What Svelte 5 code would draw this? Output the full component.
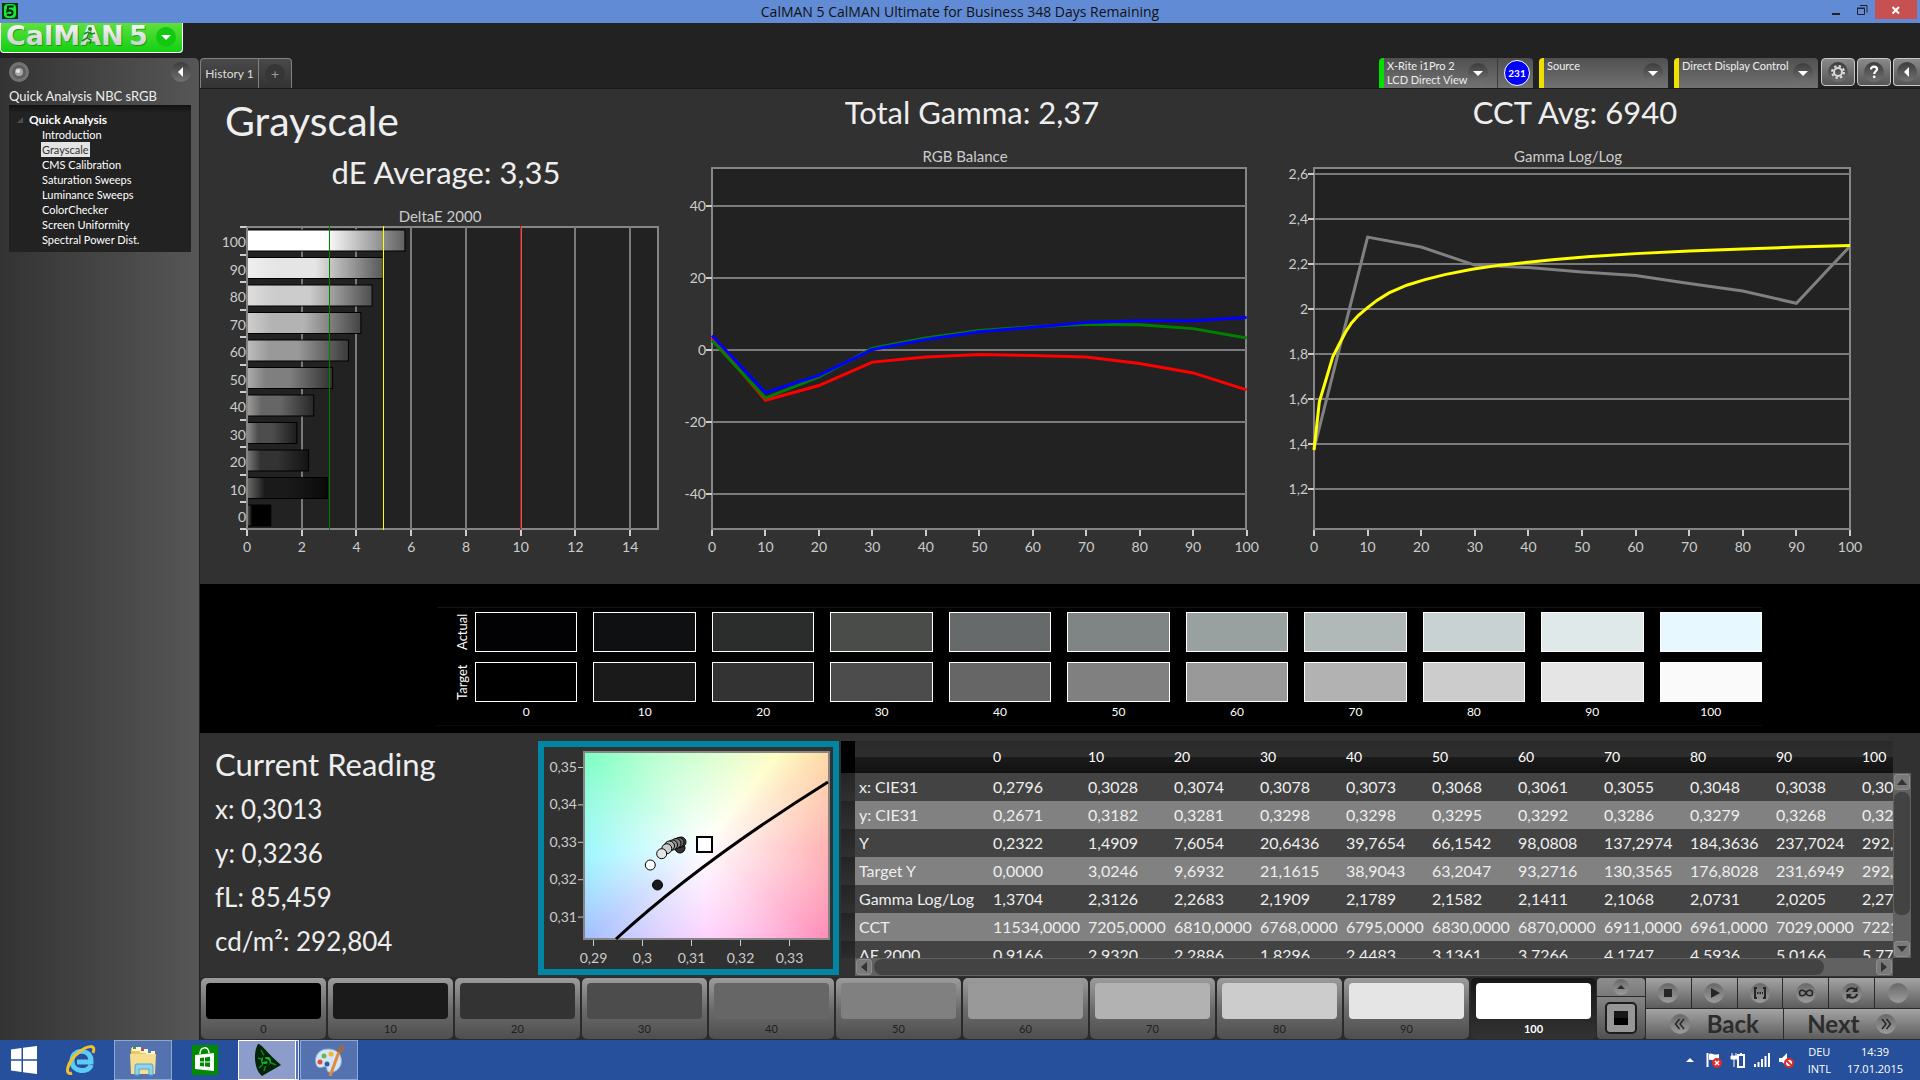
<script>
  // --- DATA ---

  const levels = [0, 10, 20, 30, 40, 50, 60, 70, 80, 90, 100];

  const pages = [
    "Introduction",
    "Grayscale",
    "CMS Calibration",
    "Saturation Sweeps",
    "Luminance Sweeps",
    "ColorChecker",
    "Screen Uniformity",
    "Spectral Power Dist.",
  ];
  let currentPage = $state("Grayscale");
  let selectedLevel = $state(100);

  const deltaE = [0.87, 2.932, 2.25, 1.82, 2.44, 3.13, 3.71, 4.16, 4.57, 4.98, 5.77];

  const rgb = [
    { color: "#ff0000", values: [3.2, -14.1, -10, -3.5, -2.1, -1.4, -1.7, -2.1, -3.9, -6.5, -11.2] },
    { color: "#008000", values: [2.5, -13.5, -7.6, 0.4, 3.2, 5.3, 6.3, 7, 6.9, 5.8, 3.2] },
    { color: "#0000ff", values: [3.9, -12, -7.2, 0, 2.8, 4.9, 6.2, 7.5, 8, 8, 8.9] },
  ];

  const gammaMeasured = [1.38, 2.318, 2.274, 2.194, 2.183, 2.164, 2.148, 2.113, 2.079, 2.025, 2.278];
  const gammaTarget = [
    [0, 1.374], [1, 1.588], [2.2, 1.684], [3.5, 1.788], [4.6, 1.839], [5.9, 1.898],
    [7, 1.938], [8.3, 1.972], [10, 2.006], [11.8, 2.039], [14, 2.071], [17.3, 2.105],
    [20.7, 2.13], [24.4, 2.152], [29.5, 2.176], [34.7, 2.194], [39.9, 2.207], [45, 2.219],
    [51, 2.231], [60, 2.245], [70, 2.257], [80, 2.266], [90, 2.274], [100, 2.281],
  ];

  const actual = [
    "#020204", "#0e1012", "#2b2d2c", "#4a4c4a", "#666a6a", "#7f8584",
    "#98a19f", "#b0b9b8", "#c8d2d2", "#dfe9ea", "#e8f8ff",
  ];
  const target = [
    "#000000", "#1a1a1a", "#333333", "#4c4c4c", "#666666", "#808080",
    "#999999", "#b2b2b2", "#cccccc", "#e5e5e5", "#fafafa",
  ];

  const readings = ["x: 0,3013", "y: 0,3236", "fL: 85,459", "cd/m²: 292,804"];

  const ciePoints = [
    { x: 657.5, y: 885, color: "#1a1a1a" },
    { x: 680, y: 848, color: "#333333" },
    { x: 681, y: 842, color: "#4c4c4c" },
    { x: 679, y: 842.5, color: "#666666" },
    { x: 676, y: 843.5, color: "#808080" },
    { x: 672.5, y: 845, color: "#999999" },
    { x: 669.5, y: 846, color: "#b2b2b2" },
    { x: 666.8, y: 848.7, color: "#cccccc" },
    { x: 661.7, y: 853.7, color: "#e5e5e5" },
    { x: 650.3, y: 865, color: "#ffffff" },
  ];

  const rows = [
    ["x: CIE31", "0,2796", "0,3028", "0,3074", "0,3078", "0,3073", "0,3068", "0,3061", "0,3055", "0,3048", "0,3038", "0,3013"],
    ["y: CIE31", "0,2671", "0,3182", "0,3281", "0,3298", "0,3298", "0,3295", "0,3292", "0,3286", "0,3279", "0,3268", "0,3236"],
    ["Y", "0,2322", "1,4909", "7,6054", "20,6436", "39,7654", "66,1542", "98,0808", "137,2974", "184,3636", "237,7024", "292,8040"],
    ["Target Y", "0,0000", "3,0246", "9,6932", "21,1615", "38,9043", "63,2047", "93,2716", "130,3565", "176,8028", "231,6949", "292,8040"],
    ["Gamma Log/Log", "1,3704", "2,3126", "2,2683", "2,1909", "2,1789", "2,1582", "2,1411", "2,1068", "2,0731", "2,0205", "2,2742"],
    ["CCT", "11534,0000", "7205,0000", "6810,0000", "6768,0000", "6795,0000", "6830,0000", "6870,0000", "6911,0000", "6961,0000", "7029,0000", "7221,0000"],
    ["ΔE 2000", "0,9166", "2,9320", "2,2886", "1,8296", "2,4483", "3,1361", "3,7266", "4,1747", "4,5936", "5,0166", "5,7712"],
  ];

  // --- SCALES ---

  const deX = (v) => 247 + v * 27.37;
  const deY = (i) => 227 + (10 - i) * 27.5;
  const rgbX = (v) => 712 + v * 5.346;
  const rgbY = (v) => 349.5 - v * 3.6;
  const gamX = (v) => 1314 + v * 5.36;
  const gamY = (v) => 173.5 + (2.6 - v) * 225.7;
  const comma = (v) => String(v).replace(".", ",");

  const line = (points, fx, fy) => points.map(([x, y]) => `${fx(x)},${fy(y)}`).join(" ");
  const byLevel = (values) => values.map((v, i) => [levels[i], v]);

  function gray(v) {
    const n = Math.round(v);
    return `rgb(${n},${n},${n})`;
  }
</script>

{#snippet drop()}
  <svg class="drop" viewBox="0 0 20 20" aria-hidden="true">
    <circle cx="10" cy="10" r="10" fill="url(#knob)" />
    <path d="M5 8h10l-5 5z" fill="#fff" />
  </svg>
{/snippet}

<svg class="defs" width="0" height="0" aria-hidden="true">
  <defs>
    <linearGradient id="knob" x1="0" y1="0" x2="0" y2="1">
      <stop offset="0" stop-color="#3c3c3c" />
      <stop offset="1" stop-color="#727272" />
    </linearGradient>
    <linearGradient id="disc" x1="0" y1="0" x2="0" y2="1">
      <stop offset="0" stop-color="#686868" />
      <stop offset="1" stop-color="#9c9c9c" />
    </linearGradient>
    <linearGradient id="silver" x1="0" y1="0" x2="0" y2="1">
      <stop offset="0" stop-color="#fff" />
      <stop offset="1" stop-color="#c4c4c4" />
    </linearGradient>
  </defs>
</svg>

<div class="window">
  <header class="titlebar">
    <svg class="app-icon" viewBox="0 0 16 16" aria-hidden="true">
      <rect width="16" height="16" fill="#043c04" />
      <rect x="2" y="1" width="12" height="14" rx="4" fill="#19e53a" />
      <path d="M11.500 3.500H6.200L5.500 8c2-1 5-.8 5 1.700 0 2.600-3 2.800-5.500 1.800" fill="none" stroke="#021" stroke-width="2.200" />
    </svg>
    <span class="title">CalMAN 5 CalMAN Ultimate for Business 348 Days Remaining</span>
    <div class="window-buttons">
      <button aria-label="Minimize"><svg viewBox="0 0 12 12"><path d="M2 9h8v2H2z" fill="#222" /></svg></button>
      <button aria-label="Restore"><svg viewBox="0 0 12 12"><path d="M1.500 4.500h7v6h-7zM1 4h8M4 1.500h7v7" fill="none" stroke="#222" /></svg></button>
      <button class="close" aria-label="Close"><svg viewBox="0 0 12 12"><path d="M2.500 3l6.500 6.500M9 3L2.500 9.500" stroke="#fff" stroke-width="2" /></svg></button>
    </div>
  </header>

  <div class="brand">
    <button class="logo" aria-label="CalMAN 5 menu">
      <svg viewBox="0 0 181 29">
        <g fill="#0a7a0a" opacity="0.6">
          <text x="6" y="23">CalMAN</text>
          <text x="129" y="23">5</text>
        </g>
        <g fill="url(#silver)">
          <text x="5" y="22">CalMAN</text>
          <text x="128" y="22">5</text>
        </g>
        <circle cx="89" cy="6" r="2" fill="#1c8a1c" />
        <path d="M83 11l4-2 4 2 3-1M88 10l-2 5 4 2-1 4M86 15l-5 3" fill="none" stroke="#1c8a1c" stroke-width="1.500" />
        <circle cx="165" cy="14" r="10" fill="#12c812" />
        <path d="M160 12h10l-5 5z" fill="#fff" />
      </svg>
    </button>
  </div>

  <div class="body">
    <aside class="sidebar">
      <div class="sidebar-tools">
        <button aria-label="Record">
          <svg viewBox="0 0 20 20"><circle cx="10" cy="10" r="10" fill="#747474" /><circle cx="10" cy="10" r="7" fill="#5e5e5e" /><circle cx="10" cy="10" r="4" fill="#a8a8a8" /><circle cx="9" cy="9" r="2" fill="#e4e4e4" /></svg>
        </button>
        <button aria-label="Collapse panel">
          <svg viewBox="0 0 20 20"><circle cx="10" cy="10" r="10" fill="url(#knob)" /><path d="M12 5v10l-5-5z" fill="#fff" /></svg>
        </button>
      </div>
      <p class="workflow">Quick Analysis NBC sRGB</p>
      <nav class="tree">
        <p class="tree-root">
          <svg viewBox="0 0 6 6" aria-hidden="true"><path d="M6 0v6H0z" fill="#4c4c4c" /></svg>
          Quick Analysis
        </p>
        <ul>
          {#each pages as page}
            <li>
              <button class:active={page === currentPage} onclick={() => (currentPage = page)}>{page}</button>
            </li>
          {/each}
        </ul>
      </nav>
    </aside>

    <main>
      <div class="tabbar">
        <div class="tabs">
          <button class="tab">History 1</button>
          <button class="tab add" aria-label="Add history"><span>+</span></button>
        </div>
        <div class="devices">
          <div class="device meter">
            <button class="device-menu">
              <span>X-Rite i1Pro 2<br />LCD Direct View</span>
              {@render drop()}
            </button>
            <span class="badge">231</span>
          </div>
          <button class="device source">
            <span>Source</span>
            {@render drop()}
          </button>
          <button class="device display">
            <span>Direct Display Control</span>
            {@render drop()}
          </button>
          <button class="tool" aria-label="Settings">
            <svg viewBox="0 0 20 20">
              <circle cx="10" cy="10" r="10" fill="url(#knob)" />
              <circle cx="10" cy="10" r="4" fill="none" stroke="#ddd" stroke-width="2" />
              <circle cx="10" cy="10" r="6" fill="none" stroke="#ddd" stroke-width="2" stroke-dasharray="2.400 2.310" />
            </svg>
          </button>
          <button class="tool" aria-label="Help">
            <svg viewBox="0 0 20 20">
              <circle cx="10" cy="10" r="10" fill="url(#knob)" />
              <path d="M7 7.500c0-4 6-3.500 6-.3 0 2-2.800 2.200-2.800 4.800" fill="none" stroke="#fff" stroke-width="2.200" />
              <circle cx="10.200" cy="14.800" r="1.400" fill="#fff" />
            </svg>
          </button>
          <button class="tool last" aria-label="Collapse toolbar">
            <svg viewBox="0 0 20 20"><circle cx="10" cy="10" r="10" fill="url(#knob)" /><path d="M12 5v10l-5-5z" fill="#fff" /></svg>
          </button>
        </div>
      </div>

      <section class="charts">
        <div class="chart first">
          <h1>Grayscale</h1>
          <h2>dE Average: 3,35</h2>
          <svg viewBox="200 195 480 389">
            <defs>
              {#each levels as level, i}
                <linearGradient id="bar{i}">
                  <stop offset="0" stop-color={gray(level * 2.55 + (255 - level * 2.55) * 0.36)} />
                  <stop offset="0.22" stop-color={gray(level * 2.55)} />
                  <stop offset="0.5" stop-color={gray(level * 2.55)} />
                  <stop offset="1" stop-color={gray(level * 2.55 * 0.38)} />
                </linearGradient>
              {/each}
            </defs>
            <text class="caption" x="440" y="222" text-anchor="middle">DeltaE 2000</text>
            <rect class="plot" x="247" y="227" width="411" height="302" />
            {#each [0, 2, 4, 6, 8, 10, 12, 14] as v}
              <path class="grid" d="M{deX(v)} 227V529" />
              <path class="tick" d="M{deX(v)} 530v6" />
              <text x={deX(v)} y="552" text-anchor="middle">{v}</text>
            {/each}
            {#each levels as level, i}
              <path class="tick" d="M240 {deY(i)}h7" />
              <rect x="247" y={deY(i) + 3} width={deX(deltaE[i]) - 247} height="21" fill="url(#bar{i})" stroke="#000" />
              <text x="246" y={deY(i) + 20} text-anchor="end">{level}</text>
            {/each}
            <path class="tick" d="M240 529h7" />
            <path class="frame" d="M247 227V529" />
            <path d="M{deX(3)} 226V530" stroke="#008000" />
            <path d="M{deX(5)} 226V530" stroke="#ffff00" />
            <path d="M{deX(10)} 226V530" stroke="#ff0000" />
          </svg>
        </div>

        <div class="chart">
          <h2>Total Gamma: 2,37</h2>
          <svg viewBox="680 135 590 449">
            <text class="caption" x="965" y="162" text-anchor="middle">RGB Balance</text>
            <rect class="plot" x="712" y="168" width="534" height="361" />
            {#each [40, 20, 0, -20, -40] as v}
              <path class="grid" d="M712 {rgbY(v)}H1246" />
              <path class="tick" d="M706 {rgbY(v)}h6" />
              <text x="706" y={rgbY(v) + 5} text-anchor="end">{v}</text>
            {/each}
            {#each levels as level}
              <path class="tick" d="M{rgbX(level)} 530v6" />
              <text x={rgbX(level)} y="552" text-anchor="middle">{level}</text>
            {/each}
            {#each rgb as series}
              <polyline points={line(byLevel(series.values), rgbX, rgbY)} stroke={series.color} />
            {/each}
          </svg>
        </div>

        <div class="chart last">
          <h2>CCT Avg: 6940</h2>
          <svg viewBox="1270 135 650 449">
            <text class="caption" x="1568" y="162" text-anchor="middle">Gamma Log/Log</text>
            <rect class="plot" x="1314" y="168" width="536" height="361" />
            {#each [2.6, 2.4, 2.2, 2, 1.8, 1.6, 1.4, 1.2] as v}
              <path class="grid" d="M1314 {gamY(v)}H1850" />
              <path class="tick" d="M1308 {gamY(v)}h6" />
              <text x="1308" y={gamY(v) + 5} text-anchor="end">{comma(v)}</text>
            {/each}
            {#each levels as level}
              <path class="tick" d="M{gamX(level)} 530v6" />
              <text x={gamX(level)} y="552" text-anchor="middle">{level}</text>
            {/each}
            <polyline points={line(byLevel(gammaMeasured), gamX, gamY)} stroke="#808080" />
            <polyline points={line(gammaTarget, gamX, gamY)} stroke="#ffff00" />
          </svg>
        </div>
      </section>

      <section class="swatches">
        <div class="swatch-grid">
          <span class="side-label">Actual</span>
          {#each actual as color}
            <div class="swatch" style="background: {color}"></div>
          {/each}
          <span class="side-label">Target</span>
          {#each target as color}
            <div class="swatch" style="background: {color}"></div>
          {/each}
          <span></span>
          {#each levels as level}
            <span class="level">{level}</span>
          {/each}
        </div>
      </section>

      <section class="lower">
        <div class="reading">
          <h2>Current Reading</h2>
          {#each readings as reading}
            <p>{reading}</p>
          {/each}
        </div>

        <div class="cie">
          <svg viewBox="544 747 289 222">
            <foreignObject x="584" y="752" width="245" height="187">
              <div class="gamut"></div>
            </foreignObject>
            <rect class="frame" x="584" y="752" width="245" height="187" fill="none" />
            {#each [0.29, 0.3, 0.31, 0.32, 0.33] as v, i}
              <path class="tick thin" d="M{593.5 + i * 49} 940v6" />
              <text x={593.5 + i * 49} y="963" text-anchor="middle">{comma(v)}</text>
            {/each}
            {#each [0.35, 0.34, 0.33, 0.32, 0.31] as v, i}
              <path class="tick thin" d="M578 {767.5 + i * 37.4}h5" />
              <text x="577" y={772 + i * 37.4} text-anchor="end">{comma(v)}</text>
            {/each}
            <path d="M616 939Q700 862 828 782" fill="none" stroke="#000" stroke-width="3" />
            {#each ciePoints as p}
              <circle cx={p.x} cy={p.y} r="5" fill={p.color} stroke="#000" />
            {/each}
            <rect x="697" y="837" width="15" height="15" fill="#fff" stroke="#000" stroke-width="2" />
          </svg>
        </div>

        <div class="data">
          <div class="table-clip">
            <table>
              <colgroup>
                <col class="c-handle" />
                <col class="c-name" />
                <col class="c-first" />
                {#each levels.slice(1) as level}
                  <col class="c-value" />
                {/each}
              </colgroup>
              <thead>
                <tr>
                  <th class="handle"></th>
                  <th></th>
                  {#each levels as level}
                    <th>{level}</th>
                  {/each}
                </tr>
              </thead>
              <tbody>
                {#each rows as row}
                  <tr>
                    <td class="handle"></td>
                    {#each row as cell}
                      <td>{cell}</td>
                    {/each}
                  </tr>
                {/each}
              </tbody>
            </table>
          </div>
          <div class="vscroll">
            <button aria-label="Scroll up"><svg viewBox="0 0 10 10"><path d="M0 8h10L5 2z" /></svg></button>
            <div class="vtrack"><div class="vthumb"></div></div>
            <button aria-label="Scroll down"><svg viewBox="0 0 10 10"><path d="M0 2h10L5 8z" /></svg></button>
          </div>
          <div class="hscroll">
            <button aria-label="Scroll left"><svg viewBox="0 0 10 10"><path d="M8 0v10L2 5z" /></svg></button>
            <div class="htrack"><div class="hthumb"></div></div>
            <button aria-label="Scroll right"><svg viewBox="0 0 10 10"><path d="M2 0v10l6-5z" /></svg></button>
          </div>
        </div>
      </section>

      <section class="controls">
        <div class="patches">
          {#each levels as level, i}
            <button class="patch" class:selected={level === selectedLevel} onclick={() => (selectedLevel = level)}>
              <span class="patch-color" style="background: {i === 10 ? '#fff' : target[i]}"></span>
              {level}
            </button>
          {/each}
        </div>
        <div class="pattern">
          <button class="expand" aria-label="Expand patterns">
            <svg viewBox="0 0 16 16"><circle cx="8" cy="8" r="8" fill="url(#disc)" /><path d="M4 10h8L8 6z" fill="#2a2a2a" /></svg>
          </button>
          <button class="window-pattern" aria-label="Window pattern">
            <svg viewBox="0 0 32 32"><rect x="1" y="1" width="30" height="30" rx="4" fill="#969696" stroke="#1c1c1c" stroke-width="2" /><rect x="9" y="9" width="14" height="14" fill="#000" /><rect x="9" y="9" width="14" height="7" fill="#181818" /></svg>
          </button>
        </div>
        <div class="transport">
          <div class="transport-row">
            <button aria-label="Stop"><svg viewBox="0 0 20 20"><circle cx="10" cy="10" r="10" fill="url(#disc)" /><rect x="6" y="6" width="8" height="8" fill="#262626" /></svg></button>
            <button aria-label="Play"><svg viewBox="0 0 20 20"><circle cx="10" cy="10" r="10" fill="url(#disc)" /><path d="M7 5v10l9-5z" fill="#262626" /></svg></button>
            <button aria-label="Read series"><svg viewBox="0 0 20 20"><circle cx="10" cy="10" r="10" fill="url(#disc)" /><path d="M7 5H5v10h2M13 5h2v10h-2" fill="none" stroke="#262626" stroke-width="2" /><path d="M7 10h6" stroke="#262626" stroke-width="2" stroke-dasharray="1.500 1" /></svg></button>
            <button aria-label="Read continuously"><svg viewBox="0 0 20 20"><circle cx="10" cy="10" r="10" fill="url(#disc)" /><path d="M10 10c-2-4-6.500-3.500-6.500 0s4.500 4 6.500 0 6.500-3.500 6.500 0-4.500 4-6.500 0z" fill="none" stroke="#262626" stroke-width="1.600" /></svg></button>
            <button aria-label="Repeat"><svg viewBox="0 0 20 20"><circle cx="10" cy="10" r="10" fill="url(#disc)" /><path d="M5 9c.5-4 6-5 9-2M15 11c-.5 4-6 5-9 2" fill="none" stroke="#262626" stroke-width="2" /><path d="M15.500 3.500V9H10zM4.500 16.500V11H10z" fill="#262626" /></svg></button>
            <button aria-label="Options"><svg viewBox="0 0 20 20"><circle cx="10" cy="10" r="10" fill="url(#disc)" /></svg></button>
          </div>
          <div class="transport-row step">
            <button>
              <svg viewBox="0 0 20 20" aria-hidden="true"><circle cx="10" cy="10" r="10" fill="url(#disc)" /><path d="M9.500 5L5.500 10l4 5M14 5l-4 5 4 5" fill="none" stroke="#262626" stroke-width="1.500" /></svg>
              Back
            </button>
            <button>
              Next
              <svg viewBox="0 0 20 20" aria-hidden="true"><circle cx="10" cy="10" r="10" fill="url(#disc)" /><path d="M6 5l4 5-4 5M10.500 5l4 5-4 5" fill="none" stroke="#262626" stroke-width="1.500" /></svg>
            </button>
          </div>
        </div>
      </section>
    </main>
  </div>

  <footer class="taskbar">
    <div class="apps">
      <button class="app start" aria-label="Start">
        <svg viewBox="0 0 26 30"><path d="M0 4.500L10.500 3v11.300H0zM12 2.800L26 1v13.300H12zM0 15.700h10.500V27L0 25.500zM12 15.700h14V29l-14-1.800z" fill="#fff" /></svg>
      </button>
      <button class="app" aria-label="Internet Explorer">
        <svg viewBox="0 0 32 32">
          <path d="M26 21c-2 8-19 8-19-4 0-13 20-13 19 1H12" fill="none" stroke="#5ccbf5" stroke-width="5" />
          <path d="M7 29C-1 32 2 18 13 9 22 1 32 0 28 9" fill="none" stroke="#f5bf2a" stroke-width="3" />
        </svg>
      </button>
      <button class="app running" aria-label="File Explorer">
        <svg viewBox="0 0 32 32">
          <path d="M4 4h8v3h7v2h9v19H4z" fill="#e8c860" />
          <path d="M5 3h9v4H5z" fill="#fff6d0" /><path d="M13 5h8v4h-8z" fill="#fff6d0" /><path d="M19 7h9v4h-9z" fill="#fff6d0" />
          <path d="M6 3h3v2H6z" fill="#1fae2c" /><path d="M14 5h3v2h-3z" fill="#d9412c" /><path d="M21 7h3v2h-3z" fill="#2f8fe0" />
          <path d="M3 10h26l-1 20H4z" fill="#f5df8e" />
          <path d="M8 31v-9q0-2 2-2h14q2 0 2 2v9h-4v-6H12v6z" fill="#8fd3ef" stroke="#4ca4d4" />
        </svg>
      </button>
      <button class="app" aria-label="Store">
        <svg viewBox="0 0 32 32">
          <rect x="3" y="1" width="26" height="30" fill="#008a00" />
          <path d="M6 11l19-2v18L6 25z" fill="#fff" />
          <path d="M11 10c0-8 9-8 9-1" fill="none" stroke="#fff" stroke-width="1.500" />
          <path d="M11 14l4-.5v4h-4zM16 13.400l5-.6v4.700h-5zM11 18.500h4v4l-4-.5zM16 18.500h5V23l-5-.5z" fill="#008a00" />
        </svg>
      </button>
      <button class="app running current" aria-label="CalMAN 5">
        <svg viewBox="0 0 32 32">
          <path d="M7 0c3-1 8 8 23 21L11 32C3 26 2 8 7 0z" fill="#04240a" />
          <path d="M16 17L10 6M16 17L7 14M16 17L8 24M16 17l-3 10M16 17l9 4" stroke="#1fc52c" stroke-width="1.500" opacity="0.600" />
          <circle cx="15" cy="17" r="5" fill="#17b02a" />
          <path d="M19 12h-5.500l-.8 4.500c2-.8 5-.5 5 2 0 2.800-3.200 3-5.700 1.900" fill="none" stroke="#020" stroke-width="2.200" />
        </svg>
      </button>
      <button class="app running" aria-label="Paint">
        <svg viewBox="0 0 32 32">
          <path d="M15 5C5 5 1 13 3 20c1 4 4 4 7 3s4 0 4 3c1 5 12 2 14-6 2-9-4-15-13-15z" fill="#d4e6f5" stroke="#8fb0cc" />
          <circle cx="7" cy="18" r="2.500" fill="#e04a3a" /><circle cx="11" cy="12" r="2.500" fill="#6bb84a" />
          <circle cx="18" cy="10" r="2.500" fill="#f5b52a" /><circle cx="14" cy="20" r="2.500" fill="#2c5ea8" />
          <path d="M27 5L17 32" stroke="#e08a3a" stroke-width="3" /><path d="M24 7c0-4 4-3 5-7 4 4 1 9-2 9z" fill="#9c6b42" />
        </svg>
      </button>
    </div>
    <div class="tray">
      <svg viewBox="0 0 16 16" aria-hidden="true"><path d="M4 10h8L8 6z" fill="#fff" /></svg>
      <svg viewBox="0 0 16 16" aria-hidden="true"><path d="M1.500 1v14" stroke="#fff" stroke-width="2" /><path d="M3 2c3-2 4 2 10 0v6c-5 2-7-1-10 0z" fill="#fff" /><circle cx="11" cy="11" r="5" fill="#e02c2c" /><path d="M9 9l4 4M13 9l-4 4" stroke="#fff" stroke-width="1.500" /></svg>
      <svg viewBox="0 0 16 16" aria-hidden="true"><path d="M8 3h6v12H8zM10 2h2" fill="none" stroke="#fff" stroke-width="2" /><path d="M1 4h6v3H1zM2 1v3M6 1v3M4 7v8" fill="#fff" stroke="#fff" /></svg>
      <svg viewBox="0 0 16 16" aria-hidden="true"><path d="M0 12h2v3H0zM3.500 10h2v5h-2zM7 7h2v8H7zM10.500 4h2v11h-2zM14 1h2v14h-2z" fill="#fff" /></svg>
      <svg viewBox="0 0 16 16" aria-hidden="true"><path d="M1 6h3l5-5v13l-5-4H1z" fill="#fff" /><circle cx="11" cy="11" r="4" fill="#fff" stroke="#e02c2c" stroke-width="2" /><path d="M8 8l6 6" stroke="#e02c2c" stroke-width="2" /></svg>
      <button class="lang">DEU<br />INTL</button>
      <button class="clock">14:39<br />17.01.2015</button>
    </div>
  </footer>
</div>

<style>
  :global(body) {
    margin: 0;
    background: #222;
  }

  .defs {
    position: absolute;
  }

  .window {
    display: flex;
    flex-direction: column;
    min-height: 100vh;
    background: #222;
    color: #eee;
    font-family: Lato, "Open Sans", sans-serif;
    font-size: 14px;
  }

  button {
    margin: 0;
    padding: 0;
    border: none;
    background: none;
    color: inherit;
    font: inherit;
    cursor: pointer;
  }

  svg {
    display: block;
  }

  h1,
  h2,
  p,
  ul {
    margin: 0;
    padding: 0;
    font-weight: 400;
  }

  /* --- Title bar --- */
  .titlebar {
    display: grid;
    grid-template-columns: 1fr auto 1fr;
    height: 23px;
    background: #628bd6;
    color: #111;
    font: 14px/23px "Open Sans", sans-serif;
  }

  .app-icon {
    width: 16px;
    height: 16px;
    margin: 3px 2px;
  }

  .window-buttons {
    display: flex;
    justify-content: flex-end;
    padding-right: 3px;
  }

  .window-buttons button {
    display: flex;
    align-items: center;
    justify-content: center;
    width: 26px;
    height: 19px;
  }

  .window-buttons .close {
    width: 42px;
    background: #c75050;
  }

  .window-buttons svg {
    width: 12px;
    height: 12px;
  }

  .brand {
    height: 35px;
  }

  .logo {
    display: block;
    width: 183px;
    height: 30px;
    border: 1px solid #fff;
    border-top: none;
    border-radius: 0 0 4px 4px;
    background: linear-gradient(#5fe03c, #12d012);
  }

  .logo svg {
    width: 100%;
    overflow: visible;
  }

  .logo text {
    font: bold 27px "DejaVu Sans", sans-serif;
  }

  .body {
    display: grid;
    grid-template-columns: 200px minmax(0, 1fr);
    flex: 1;
  }

  /* --- Sidebar --- */
  .sidebar {
    margin-right: 1px;
    padding: 4px 8px 0 9px;
    border-radius: 0 5px 0 0;
    background: linear-gradient(90deg, #333, #565656);
  }

  .sidebar-tools {
    display: flex;
    justify-content: space-between;
  }

  .sidebar-tools svg,
  .tool svg,
  .drop {
    width: 20px;
    height: 20px;
  }

  .workflow {
    margin-top: 5px;
    font-size: 13px;
    line-height: 18px;
  }

  .tree {
    padding: 7px 8px 5px;
    background: linear-gradient(#121212, #222 8px);
    color: #fff;
    font-size: 12px;
    line-height: 15px;
  }

  .tree-root {
    display: flex;
    align-items: center;
    gap: 6px;
    font-weight: 700;
  }

  .tree-root svg {
    width: 6px;
    height: 6px;
  }

  .tree ul {
    padding-left: 24px;
    list-style: none;
  }

  .tree li {
    display: flex;
  }

  .tree li button {
    padding: 0 1px;
    font-size: 11px;
  }

  .tree .active {
    background: #e4e4e4;
    color: #333;
  }

  /* --- Tab bar --- */
  main {
    display: flex;
    flex-direction: column;
    background: #313131;
  }

  .tabbar {
    display: flex;
    justify-content: space-between;
    height: 30px;
    border-bottom: 1px solid #1a1a1a;
    background: #222;
  }

  .tabs {
    display: flex;
  }

  .tab {
    width: 59px;
    border: 1px solid #808080;
    border-bottom: none;
    border-radius: 4px 0 0 0;
    background: linear-gradient(#4a4a4a, #333);
    color: #ddd;
    font-size: 12px;
  }

  .tab.add {
    width: 33px;
    border-left: none;
    border-radius: 0 4px 0 0;
    color: #999;
    font-size: 14px;
  }

  .tab.add span {
    display: block;
    width: 20px;
    margin: 0 auto;
    border-radius: 50%;
    background: #363636;
    line-height: 20px;
  }

  .devices {
    display: flex;
  }

  .device {
    display: flex;
    align-items: flex-start;
    justify-content: space-between;
    margin-right: 6px;
    border-left: 5px solid #f0e000;
    border-radius: 4px 4px 0 0;
    background: linear-gradient(#505050, #727272);
    font-size: 11px;
    line-height: 14px;
    text-align: left;
    white-space: nowrap;
  }

  .device .drop {
    margin: 5px 5px 0 0;
  }

  .device > span:first-child,
  .device-menu > span {
    padding: 1px 0 0 3px;
  }

  .meter {
    width: 149px;
    border-left-color: #00e000;
  }

  .device-menu {
    display: flex;
    flex: 1;
    justify-content: space-between;
    align-items: flex-start;
    height: 30px;
    border-right: 1px solid #3c3c3c;
    line-height: 14px;
    text-align: left;
  }

  .device-menu .drop {
    margin-right: 9px;
  }

  .badge {
    width: 24px;
    height: 24px;
    margin: 2px 3px 0 6px;
    border: 1px solid #fff;
    border-radius: 50%;
    background: #00f;
    color: #fff;
    font-size: 10px;
    font-weight: 700;
    line-height: 24px;
    text-align: center;
  }

  .source {
    width: 129px;
  }

  .display {
    width: 144px;
    margin-right: 3px;
  }

  .tool {
    display: flex;
    align-items: center;
    justify-content: center;
    width: 34px;
    height: 28px;
    margin-right: 2px;
    border: 1px solid #c8c8c8;
    border-radius: 4px;
    background: linear-gradient(#8a8a8a, #555);
  }

  .tool.last {
    width: 27px;
    margin-right: 0;
    border-right: none;
    border-radius: 4px 0 0 4px;
  }

  /* --- Charts --- */
  .charts {
    display: grid;
    grid-template-columns: 480fr 590fr 650fr;
  }

  h1 {
    padding: 8px 0 4px 25px;
    font-size: 41px;
    line-height: 48px;
  }

  h2 {
    font-size: 31px;
    line-height: 46px;
    text-align: center;
  }

  .first h2 {
    padding-left: 12px;
  }

  .last h2 {
    padding-right: 40px;
  }

  .chart:not(.first):not(.last) h2 {
    padding-right: 6px;
  }

  .chart svg {
    width: 100%;
  }

  .chart path {
    shape-rendering: crispEdges;
  }

  .chart text,
  .cie text {
    fill: #ccc;
    font-size: 14px;
  }

  .chart .caption {
    font-size: 15px;
  }

  .plot {
    fill: #222;
    stroke: #868686;
    stroke-width: 2;
  }

  .grid {
    stroke: #7a7a7a;
    stroke-width: 2;
  }

  .frame {
    stroke: #868686;
    stroke-width: 2;
  }

  .tick {
    stroke: #ccc;
    stroke-width: 2;
  }

  .thin {
    stroke-width: 1;
  }

  polyline {
    fill: none;
    stroke-width: 3;
  }

  /* --- Swatches --- */
  .swatches {
    padding: 23px 158px 7px 253px;
    background: #000;
  }

  .swatch-grid {
    display: grid;
    grid-template-columns: 22px repeat(11, 1fr);
    column-gap: 16px;
    padding: 4px 0;
    margin-left: -16px;
    border-top: 1px solid #141414;
    border-bottom: 1px solid #0c0c0c;
    color: #fff;
  }

  .swatch {
    height: 38px;
    margin-bottom: 10px;
    border: 1px solid #fff;
  }

  .side-label {
    height: 40px;
    justify-self: end;
    margin-right: -12px;
    transform: rotate(180deg);
    writing-mode: vertical-rl;
    font-size: 13px;
    line-height: 18px;
    text-align: center;
  }

  .level {
    margin-top: -9px;
    font-size: 12px;
    line-height: 18px;
    text-align: center;
  }

  /* --- Lower panel --- */
  .lower {
    display: grid;
    grid-template-columns: 336px 301px minmax(0, 1fr);
    column-gap: 2px;
    flex: 1;
    padding: 8px 9px 1px 0;
  }

  .reading {
    padding-left: 15px;
  }

  .reading h2 {
    text-align: left;
  }

  .reading p {
    font-size: 26px;
    line-height: 44px;
  }

  .cie {
    align-self: start;
    border: 6px solid #0085a3;
  }

  .cie svg {
    width: 100%;
  }

  .gamut {
    height: 100%;
    background:
      radial-gradient(circle at 49% 50%, #fff, rgba(255, 255, 255, 0.5) 50%, rgba(255, 255, 255, 0) 100%),
      conic-gradient(
        at 49% 50%,
        #b8ffb0 0deg,
        #fdfdb0 39deg,
        #ffd8a4 54deg,
        #ffa0a0 90deg,
        #ff8cb8 127deg,
        #ffb4ff 178deg,
        #a0bcff 232deg,
        #80f4ff 265deg,
        #78ffc0 308deg,
        #b8ffb0 360deg
      );
  }

  .data {
    display: grid;
    grid-template-columns: minmax(0, 1fr) 18px;
    grid-template-rows: 217px 18px;
  }

  .table-clip {
    overflow: hidden;
  }

  table {
    width: 1103px;
    table-layout: fixed;
    border-collapse: collapse;
    font-size: 16px;
    line-height: 28px;
  }

  .c-handle {
    width: 14px;
  }

  .c-name {
    width: 134px;
  }

  .c-first {
    width: 95px;
  }

  .c-value {
    width: 86px;
  }

  th,
  td {
    padding: 0 0 0 4px;
    text-align: left;
    white-space: nowrap;
  }

  thead tr {
    height: 32px;
    background: linear-gradient(#2a2a2a 0%, #2e2e2e 50%, #1b1b1b 50%, #111 100%);
  }

  th {
    font-size: 14px;
    font-weight: 400;
    color: #fff;
  }

  tbody tr {
    height: 28px;
    background: #434343;
  }

  tbody tr:nth-child(even) {
    background: #818181;
  }

  th.handle {
    background: #000;
  }

  td.handle {
    background: linear-gradient(#242424, #303030);
  }

  .vscroll,
  .hscroll {
    display: flex;
    background: #616161;
  }

  .vscroll {
    flex-direction: column;
    margin-top: 32px;
    padding: 1px;
  }

  .hscroll {
    margin-left: 14px;
    padding: 1px;
  }

  .vscroll button,
  .hscroll button {
    display: flex;
    align-items: center;
    justify-content: center;
    flex: none;
    width: 16px;
    height: 16px;
    border: 1px solid #8c8c8c;
    border-radius: 3px;
    background: #7a7a7a;
  }

  .vscroll svg,
  .hscroll svg {
    width: 10px;
    height: 10px;
    fill: #333;
  }

  .vtrack,
  .htrack {
    flex: 1;
    padding: 2px 0;
  }

  .htrack {
    padding: 0 2px;
  }

  .vthumb {
    height: 84%;
    border-radius: 7px;
    background: #434343;
  }

  .hthumb {
    width: 95%;
    height: 16px;
    border-radius: 8px;
    background: #434343;
  }

  /* --- Pattern and transport controls --- */
  .controls {
    display: flex;
    height: 63px;
    background: #2a2a2a;
  }

  .patches {
    display: grid;
    grid-template-columns: repeat(11, 1fr);
    flex: 1;
    column-gap: 2px;
    padding: 1px;
  }

  .patch {
    display: flex;
    flex-direction: column;
    align-items: stretch;
    padding: 5px 5px 0;
    border-radius: 5px;
    background: linear-gradient(#9c9c9c, #6c6c6c 50%, #4e4e4e);
    color: #1e1e1e;
    font-size: 11px;
    line-height: 20px;
    text-align: center;
  }

  .patch-color {
    display: block;
    height: 36px;
    border-radius: 4px;
  }

  .patch.selected {
    background: linear-gradient(#161616, #333);
    color: #fff;
    font-weight: 700;
  }

  .pattern {
    display: flex;
    flex-direction: column;
    gap: 1px;
    width: 48px;
    margin: 1px 1px 1px 0;
  }

  .pattern button {
    display: flex;
    align-items: center;
    justify-content: center;
    background: linear-gradient(#8e8e8e, #7a7a7a);
  }

  .expand {
    height: 18px;
    border-radius: 4px 4px 0 0;
  }

  .expand svg {
    width: 16px;
    height: 16px;
  }

  .pattern .window-pattern {
    flex: 1;
    border-radius: 0 0 4px 4px;
    background: linear-gradient(#848484, #505050);
  }

  .window-pattern svg {
    width: 32px;
    height: 32px;
  }

  .transport {
    display: flex;
    flex-direction: column;
    gap: 1px;
    width: 274px;
    padding: 1px 0;
  }

  .transport-row {
    display: flex;
    flex: 1;
    gap: 1px;
  }

  .transport-row button {
    display: flex;
    align-items: center;
    justify-content: center;
    flex: 1;
    background: linear-gradient(#a4a4a4, #5c5c5c);
  }

  .transport-row svg {
    width: 20px;
    height: 20px;
  }

  .step button {
    gap: 17px;
    color: #2c2c2c;
    font-size: 24px;
    font-weight: 700;
    line-height: 28px;
  }

  /* --- Taskbar --- */
  .taskbar {
    display: flex;
    justify-content: space-between;
    height: 40px;
    background: #264f9c;
    color: #fff;
  }

  .apps {
    display: flex;
    gap: 4px;
  }

  .app {
    display: flex;
    align-items: center;
    justify-content: center;
    box-sizing: border-box;
    width: 58px;
  }

  .app svg {
    width: 32px;
    height: 32px;
  }

  .app.start {
    width: 48px;
  }

  .start svg {
    width: 26px;
    height: 30px;
  }

  .running {
    border: 1px solid #8ea6d4;
    background: #5472b0;
  }

  .current {
    border-color: #fff;
    background: #8c9ccb;
    box-shadow: 3px 0 0 -1px #5472b0, 3px 0 0 0 #dde4f4;
  }

  .tray {
    display: flex;
    align-items: center;
    gap: 8px;
    padding-right: 17px;
    font: 11px/17px "Open Sans", sans-serif;
    text-align: center;
  }

  .tray svg {
    width: 16px;
    height: 16px;
  }

  .lang {
    margin: 0 8px 0 6px;
  }
</style>
